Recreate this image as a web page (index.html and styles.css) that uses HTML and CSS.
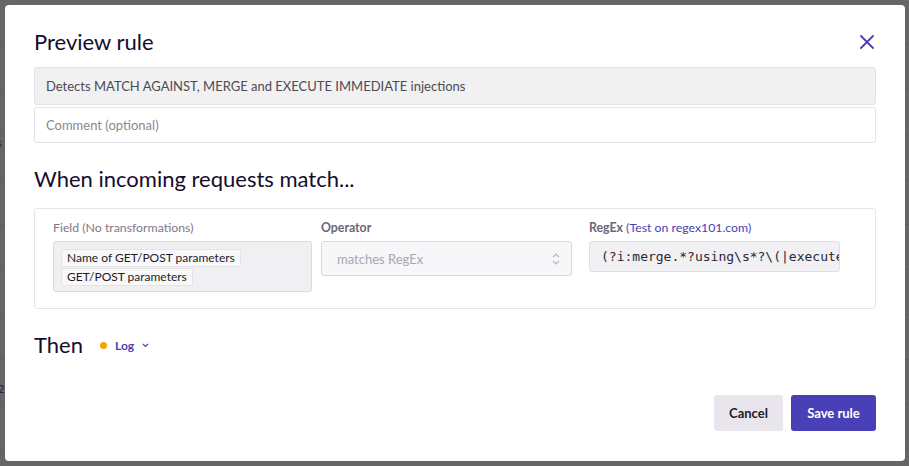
FILE: index.html
```html
<!DOCTYPE html>
<html>
<head>
<meta charset="utf-8">
<link rel="stylesheet" href="styles.css">
</head>
<body>
<div class="backdrop">
  <div class="page-peek">
    <span class="peek-s">s</span>
    <span class="peek-2">2</span>
  </div>
  <div class="modal">
    <div class="modal-header">
      <h1 class="title">Preview rule</h1>
      <button class="close" aria-label="Close">
        <svg width="14" height="14" viewBox="0 0 14 14"><path d="M1 1 L13 13 M13 1 L1 13" stroke="#4b40b8" stroke-width="1.8" fill="none" stroke-linecap="round"/></svg>
      </button>
    </div>
    <div class="inputs">
      <div class="input input-disabled">Detects MATCH AGAINST, MERGE and EXECUTE IMMEDIATE injections</div>
      <div class="input input-placeholder">Comment (optional)</div>
    </div>
    <h2 class="section-title">When incoming requests match...</h2>
    <div class="cond-box">
      <div class="col col-field">
        <div class="label">Field (No transformations)</div>
        <div class="field-box">
          <span class="tag">Name of GET/POST parameters</span>
          <span class="tag">GET/POST parameters</span>
        </div>
      </div>
      <div class="col col-op">
        <div class="label label-strong">Operator</div>
        <div class="select">
          <span>matches RegEx</span>
          <svg width="10" height="14" viewBox="0 0 10 14"><path d="M2 5 L5 2 L8 5 M2 9 L5 12 L8 9" stroke="#b5b3bd" stroke-width="1.1" fill="none"/></svg>
        </div>
      </div>
      <div class="col col-regex">
        <div class="label"><span class="label-strong">RegEx</span> <span class="link">(Test on regex101.com)</span></div>
        <div class="regex-input"><span class="regex-text">(?i:merge.*?using\s*?\(|execute</span></div>
      </div>
    </div>
    <div class="then-row">
      <h2 class="then-title">Then</h2>
      <div class="action">
        <span class="dot"></span>
        <span class="action-label">Log</span>
        <svg width="7" height="5" viewBox="0 0 7 5"><path d="M1 1 L3.5 3.5 L6 1" stroke="#4b40b8" stroke-width="1.2" fill="none"/></svg>
      </div>
    </div>
    <div class="footer">
      <button class="btn btn-cancel">Cancel</button>
      <button class="btn btn-save">Save rule</button>
    </div>
  </div>
</div>
</body>
</html>
```
FILE: styles.css
```css
html, body {
  margin: 0;
  padding: 0;
  height: 100%;
}
body {
  font-family: Lato, "Open Sans", Arial, sans-serif;
  background: #666666;
  overflow: hidden;
}
.backdrop {
  position: relative;
  width: 909px;
  height: 466px;
  background-color: #666666;
  background-image: repeating-linear-gradient(to bottom, transparent 0, transparent 44px, #5f5f5f 44px, #5f5f5f 45px, transparent 45px, transparent 40.8px);
  padding: 5px 0 0 5px;
  box-sizing: border-box;
}
.page-peek {
  position: absolute;
  left: 0;
  top: 0;
  width: 5px;
  height: 466px;
  overflow: hidden;
  font-size: 13px;
  color: #2a2548;
}
.peek-s { position: absolute; left: 0; top: 136px; font-size: 11px; transform: translateX(-3px); }
.peek-2 { position: absolute; left: 0; top: 382px; font-size: 11px; transform: translateX(-2px); }

.modal {
  position: relative;
  width: 900px;
  height: 456px;
  background: #ffffff;
  border-radius: 4px;
  box-sizing: border-box;
  padding: 24px 29px 30px 29px;
  display: flex;
  flex-direction: column;
  color: #1b1234;
}
.modal-header {
  display: flex;
  justify-content: space-between;
  align-items: center;
  height: 26px;
}
.title {
  margin: 0;
  font-size: 22px;
  font-weight: 400;
  line-height: 26px;
  color: #140d2b;
}
.close {
  border: 0;
  background: none;
  padding: 0;
  width: 14px;
  height: 14px;
  margin-right: 2px;
  display: flex;
}
.inputs {
  margin-top: 12px;
  display: flex;
  flex-direction: column;
  gap: 2px;
}
.input {
  height: 36px;
  box-sizing: border-box;
  border: 1px solid #e3e2e8;
  border-radius: 3px;
  padding: 0 11px;
  display: flex;
  align-items: center;
  font-size: 13px;
}
.input-disabled {
  background: #f1f1f1;
  color: #4d4a55;
  height: 38px;
}
.input-placeholder {
  background: #ffffff;
  color: #8a8792;
}
.section-title {
  margin: 23px 0 0 0;
  font-size: 22px;
  font-weight: 400;
  line-height: 26px;
  color: #140d2b;
}
.cond-box {
  margin-top: 16px;
  height: 101px;
  box-sizing: border-box;
  border: 1px solid #e6e6ea;
  border-radius: 3px;
  padding: 11px 18px 0 18px;
  display: flex;
}
.col { display: flex; flex-direction: column; }
.col-field { width: 259px; margin-right: 9px; }
.col-op { width: 251px; margin-right: 17px; }
.col-regex { width: 251px; }
.label {
  font-size: 12.3px;
  line-height: 16px;
  color: #7d7888;
  margin-bottom: 5px;
  white-space: nowrap;
}
.label-strong {
  font-weight: 700;
  color: #6b6678;
}
.link { color: #4b40b8; }
.field-box {
  height: 51px;
  box-sizing: border-box;
  background: #f0f0f2;
  border: 1px solid #dcdbe1;
  border-radius: 3px;
  padding: 7px 7px;
  display: flex;
  flex-direction: column;
  align-items: flex-start;
  gap: 1px;
}
.tag {
  font-size: 12px;
  line-height: 16px;
  padding: 0 5px;
  background: #f8f8f8;
  border: 1px solid #e4e3e6;
  border-radius: 2px;
  color: #1f1b2a;
}
.select {
  height: 35px;
  box-sizing: border-box;
  background: #f7f7f9;
  border: 1px solid #d8d7dd;
  border-radius: 3px;
  padding: 0 10px 0 15px;
  display: flex;
  align-items: center;
  justify-content: space-between;
  font-size: 13px;
  color: #a8a6ae;
}
.regex-input {
  height: 31px;
  box-sizing: border-box;
  background: #f1f1f3;
  border: 1px solid #e0dfe4;
  border-radius: 3px;
  padding: 0 0 0 11px;
  font-family: "DejaVu Sans Mono", "Liberation Mono", monospace;
  font-size: 13px;
  line-height: 29px;
  color: #2a2638;
  white-space: nowrap;
  overflow: hidden;
}
.then-row {
  margin-top: 23px;
  display: flex;
  align-items: center;
}
.then-title {
  margin: 0 17px 0 0;
  font-size: 22px;
  font-weight: 400;
  line-height: 26px;
  color: #140d2b;
}
.action {
  display: flex;
  align-items: center;
  margin-top: 1px;
}
.dot {
  width: 7px;
  height: 7px;
  border-radius: 50%;
  background: #f5a300;
  margin-right: 8px;
}
.action-label {
  font-size: 12px;
  font-weight: 700;
  color: #4b40b8;
  margin-right: 8px;
}
.footer {
  margin-top: auto;
  display: flex;
  justify-content: flex-end;
  gap: 8px;
}
.btn {
  height: 36px;
  border: 0;
  border-radius: 3px;
  font-family: Lato, "Open Sans", Arial, sans-serif;
  font-size: 13px;
  font-weight: 700;
  padding: 0 12px;
  cursor: pointer;
}
.btn-cancel {
  background: #e8e6ec;
  color: #1f1b2a;
  width: 69px;
}
.btn-save {
  background: #4940b8;
  color: #ffffff;
  width: 85px;
}
```
